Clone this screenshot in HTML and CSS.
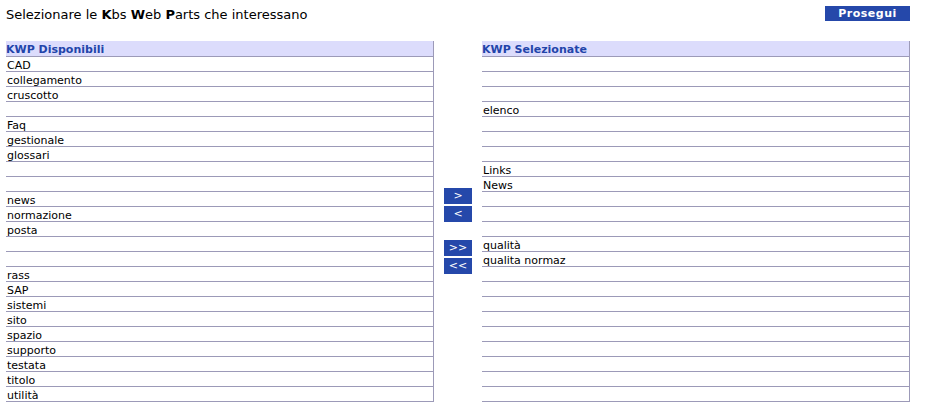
FILE: index.html
```html
<!DOCTYPE html>
<html lang="it">
<head>
    <meta charset="UTF-8">
    <title>Selezione Kbs Web Parts</title>
    <link rel="stylesheet" href="styles.css">
</head>
<body>

<div class="topbar">
    <div class="intro">Selezionare le <b>K</b>bs <b>W</b>eb <b>P</b>arts che interessano</div>
    <button class="btn-next">Prosegui</button>
</div>

<div class="picker">
    <!-- Elenco disponibili -->
    <div class="list">
        <div class="list-head">KWP Disponibili</div>
        <div class="row">CAD</div>
        <div class="row">collegamento</div>
        <div class="row">cruscotto</div>
        <div class="row"></div>
        <div class="row">Faq</div>
        <div class="row">gestionale</div>
        <div class="row">glossari</div>
        <div class="row"></div>
        <div class="row"></div>
        <div class="row">news</div>
        <div class="row">normazione</div>
        <div class="row">posta</div>
        <div class="row"></div>
        <div class="row"></div>
        <div class="row">rass</div>
        <div class="row">SAP</div>
        <div class="row">sistemi</div>
        <div class="row">sito</div>
        <div class="row">spazio</div>
        <div class="row">supporto</div>
        <div class="row">testata</div>
        <div class="row">titolo</div>
        <div class="row">utilità</div>
    </div>

    <!-- Pulsanti di spostamento -->
    <div class="moves">
        <div class="move-group">
            <button class="btn-move">&gt;</button>
            <button class="btn-move">&lt;</button>
        </div>
        <div class="move-group">
            <button class="btn-move">&gt;&gt;</button>
            <button class="btn-move">&lt;&lt;</button>
        </div>
    </div>

    <!-- Elenco selezionati -->
    <div class="list">
        <div class="list-head">KWP Selezionate</div>
        <div class="row"></div>
        <div class="row"></div>
        <div class="row"></div>
        <div class="row">elenco</div>
        <div class="row"></div>
        <div class="row"></div>
        <div class="row"></div>
        <div class="row">Links</div>
        <div class="row">News</div>
        <div class="row"></div>
        <div class="row"></div>
        <div class="row"></div>
        <div class="row">qualità</div>
        <div class="row">qualita normaz</div>
        <div class="row"></div>
        <div class="row"></div>
        <div class="row"></div>
        <div class="row"></div>
        <div class="row"></div>
        <div class="row"></div>
        <div class="row"></div>
        <div class="row"></div>
        <div class="row"></div>
    </div>
</div>

</body>
</html>
```

FILE: styles.css
```css
body {
    margin: 0;
    padding: 6px 16px 0 6px;
    background-color: #fff;
    font-family: "DejaVu Sans", Verdana, sans-serif;
    font-size: 11px;
    color: #000;
}
.topbar {
    display: flex;
    justify-content: space-between;
    align-items: flex-start;
    height: 35px;
}
.intro {
    font-size: 13px;
    line-height: 16px;
    padding-top: 1px;
}
.btn-next {
    width: 85px;
    height: 15px;
    padding: 0;
    border: none;
    background-color: #2548aa;
    color: #fff;
    font-family: "DejaVu Sans", Verdana, sans-serif;
    font-size: 11px;
    font-weight: bold;
    letter-spacing: 0.5px;
    line-height: 15px;
    cursor: pointer;
}
.picker {
    display: flex;
}
.list {
    width: 427px;
    border-right: 1px solid #9c9ab8;
}
.list-head {
    height: 13px;
    padding-top: 2px;
    line-height: 14px;
    background-color: #dcdcfc;
    border-bottom: 1px solid #9c9ab8;
    color: #2244aa;
    font-size: 11px;
    font-weight: bold;
}
.row {
    height: 12px;
    padding: 2px 0 0 1px;
    line-height: 13px;
    border-bottom: 1px solid #9c9ab8;
    white-space: nowrap;
}
.moves {
    width: 48px;
    padding-top: 147px;
    display: flex;
    flex-direction: column;
    align-items: center;
    gap: 18px;
}
.move-group {
    display: flex;
    flex-direction: column;
    gap: 2px;
}
.btn-move {
    width: 28px;
    height: 16px;
    padding: 0;
    border: none;
    background-color: #2548aa;
    color: #fff;
    font-family: "DejaVu Sans", Verdana, sans-serif;
    font-size: 11px;
    line-height: 16px;
    cursor: pointer;
}
```
